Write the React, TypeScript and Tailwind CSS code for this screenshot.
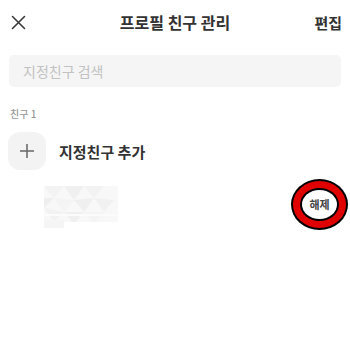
import React from "react";

const font = { fontFamily: '"Noto Sans CJK KR", "Noto Sans", sans-serif' };

function Mosaic() {
  return (
    <svg width="74" height="42" viewBox="0 0 74 42" className="block">
      <rect x="0" y="0" width="74" height="42" fill="#f8f8f8" />
      <polygon points="0,0 20,0 10,12" fill="#f3f3f3" />
      <polygon points="20,0 40,0 30,14" fill="#f0f0f0" />
      <polygon points="40,0 60,0 50,12" fill="#f2f2f2" />
      <polygon points="0,12 10,12 0,22" fill="#eeeeee" />
      <polygon points="10,12 30,14 20,26" fill="#f4f4f4" />
      <polygon points="30,14 50,12 40,26" fill="#efefef" />
      <polygon points="50,12 70,14 60,26" fill="#f1f1f1" />
      <polygon points="0,22 20,26 10,36" fill="#f2f2f2" />
      <polygon points="20,26 40,26 30,38" fill="#f0f0f0" />
      <polygon points="40,26 60,26 50,38" fill="#f4f4f4" />
      <rect x="0" y="28" width="74" height="2" fill="#fbfbfb" />
      <rect x="0" y="34" width="20" height="8" fill="#f5f5f5" />
      <rect x="20" y="36" width="54" height="6" fill="#ffffff" />
    </svg>
  );
}

export default function App() {
  return (
    <div className="w-[350px] h-[338px] bg-white text-[#333]" style={font}>
      <div className="grid grid-cols-[1fr_auto_1fr] items-center h-[44px] px-[11px]">
        <div className="flex items-center">
          <svg width="15" height="15" viewBox="0 0 15 15">
            <path d="M1.5 1.5 L13.5 13.5 M13.5 1.5 L1.5 13.5" stroke="#3a3a3a" strokeWidth="1.6" strokeLinecap="round" />
          </svg>
        </div>
        <div className="text-[16px] font-bold leading-none">프로필 친구 관리</div>
        <div className="flex justify-end">
          <span className="text-[15px] font-bold leading-none mr-[-3px]">편집</span>
        </div>
      </div>
      <div className="mx-[9px] mt-[11px] h-[32px] rounded-[5px] bg-[#f5f5f5] flex items-center pl-[14px]">
        <span className="text-[14px] text-[#c2c2c2] leading-none">지정친구 검색</span>
      </div>
      <div className="px-[10px] mt-[22px] text-[10px] leading-none text-[#999] font-medium">친구 1</div>
      <div className="flex items-center px-[8px] mt-[13px]">
        <div className="w-[38px] h-[38px] rounded-[12px] bg-[#f3f3f3] flex items-center justify-center">
          <svg width="16" height="16" viewBox="0 0 16 16">
            <path d="M8 1 V15 M1 8 H15" stroke="#666" strokeWidth="1.5" />
          </svg>
        </div>
        <span className="ml-[13px] text-[15px] font-bold leading-none">지정친구 추가</span>
      </div>
      <div className="flex items-center justify-between mt-[9px] pl-[44px] pr-[2px]">
        <div className="pt-[5px]">
          <Mosaic />
        </div>
        <div className="relative w-[57px] h-[51px] flex items-center justify-center">
          <div className="absolute inset-0 rounded-[50%] bg-black" />
          <div className="absolute inset-[2px] rounded-[50%] bg-[#e00000]" />
          <div className="absolute inset-[9px] rounded-[50%] bg-black" />
          <div className="absolute inset-[11px] rounded-[50%] bg-white" />
          <span className="relative text-[11px] font-semibold text-[#444] leading-none">해제</span>
        </div>
      </div>
    </div>
  );
}
